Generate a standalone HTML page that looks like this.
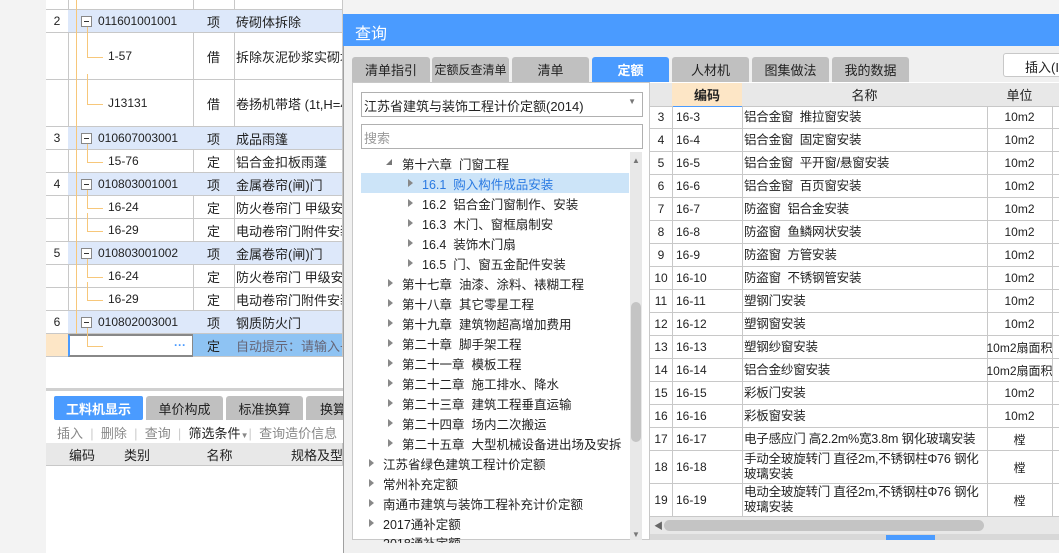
<!DOCTYPE html><html><head><meta charset="utf-8"><style>
*{margin:0;padding:0;box-sizing:border-box}
body{width:1059px;height:553px;overflow:hidden;background:#f3f3f3;font-family:"Liberation Sans","Noto Sans CJK SC",sans-serif;font-size:12px;color:#222;position:relative}
.a{position:absolute;white-space:nowrap}
.c{position:absolute;border-right:1px solid #c8c8c8;border-bottom:1px solid #c8c8c8;display:flex;align-items:center;overflow:hidden;white-space:nowrap;padding-left:4px}
.cc{justify-content:center;padding-left:0}
.blue{background:#dde8fa}
.tab{position:absolute;height:25px;background:#c0c0c0;border-radius:3px 3px 0 0;display:flex;align-items:center;justify-content:center;font-size:13px;color:#222;white-space:nowrap;overflow:hidden}
.tab.on{background:#4a9bff;color:#fff;font-weight:bold}
.tri{display:inline-block;width:0;height:0;border-left:5px solid #888;border-top:4px solid transparent;border-bottom:4px solid transparent}
.tr{position:absolute;height:20px;display:flex;align-items:center;font-size:12.5px;white-space:nowrap}
.box{position:absolute;width:11px;height:11px;border:1px solid #888;background:#fff}
.box:after{content:"";position:absolute;left:2px;top:4px;width:5px;height:1px;background:#333}
</style></head><body>
<div class="a" style="left:46px;top:0;width:297px;height:553px;background:#fff"></div>
<div id="lg"></div>
<div class="a" style="left:76px;top:0;width:1px;height:334px;background:#f7c77a"></div>
<div class="a" style="left:46px;top:388px;width:297px;height:3px;background:#d0d0d0"></div>
<div class="tab on" style="left:54px;top:396px;width:89px;height:24px;border-radius:2px">工料机显示</div>
<div class="tab" style="left:146px;top:396px;width:77px;height:24px">单价构成</div>
<div class="tab" style="left:226px;top:396px;width:77px;height:24px">标准换算</div>
<div class="tab" style="left:306px;top:396px;width:40px;height:24px;justify-content:flex-start;padding-left:14px">换算</div>
<div class="a" style="left:46px;top:420px;width:297px;height:23px;background:#fff;font-size:13px;color:#888;padding:3px 0 0 11px">插入 <span style="color:#ccc">&nbsp;|&nbsp;</span> 删除 <span style="color:#ccc">&nbsp;|&nbsp;</span> 查询 <span style="color:#ccc">&nbsp;|&nbsp;</span> <span style="color:#222">筛选条件</span><span style="font-size:8px">▼</span><span style="color:#ccc">|&nbsp;</span> 查询造价信息</div>
<div class="c cc" style="left:46px;top:443px;width:73px;height:23px;background:#e8e8e8;font-size:13px">编码</div>
<div class="c cc" style="left:118px;top:443px;width:39px;height:23px;background:#e8e8e8;font-size:13px">类别</div>
<div class="c cc" style="left:156px;top:443px;width:128px;height:23px;background:#e8e8e8;font-size:13px">名称</div>
<div class="c" style="left:283px;top:443px;width:60px;height:23px;background:#e8e8e8;font-size:13px;padding-left:8px">规格及型号</div>

<div class="a" style="left:343px;top:14px;width:716px;height:539px;background:#f0f0f0;border-left:1px solid #a0a0a0"></div>
<div class="a" style="left:343px;top:14px;width:716px;height:32px;background:#4a9bff;color:#fff;font-size:16px;padding:6px 0 0 12px">查询</div>
<div class="tab" style="left:352px;top:57px;width:78px">清单指引</div>
<div class="tab" style="left:432px;top:57px;width:77px;font-size:12px">定额反查清单</div>
<div class="tab" style="left:512px;top:57px;width:77px">清单</div>
<div class="tab on" style="left:592px;top:57px;width:77px">定额</div>
<div class="tab" style="left:672px;top:57px;width:77px">人材机</div>
<div class="tab" style="left:752px;top:57px;width:77px">图集做法</div>
<div class="tab" style="left:832px;top:57px;width:77px">我的数据</div>
<div class="a" style="left:1003px;top:53px;width:60px;height:24px;background:#fff;border:1px solid #c8c8c8;border-radius:3px;font-size:13px;padding:3px 0 0 21px">插入(I)</div>
<div class="a" style="left:352px;top:82px;width:298px;height:458px;background:#fff;border:1px solid #c8c8c8"></div>
<div class="a" style="left:361px;top:92px;width:282px;height:25px;border:1px solid #b0b0b0;background:#fff;font-size:13px;padding:3px 0 0 2px">江苏省建筑与装饰工程计价定额(2014)<span style="position:absolute;right:6px;top:4px;font-size:8px;color:#777">▼</span></div>
<div class="a" style="left:361px;top:124px;width:282px;height:25px;border:1px solid #b0b0b0;background:#fff;font-size:13px;color:#999;padding:3px 0 0 2px">搜索</div>
<div class="a" style="left:361px;top:173px;width:268px;height:20px;background:#cce4f8"></div>
<div class="a" style="left:630px;top:152px;width:12px;height:388px;background:#e8e8e8"></div>
<div class="a" style="left:631px;top:302px;width:10px;height:140px;background:#c4c4c4;border-radius:5px"></div>
<div class="a" style="left:632px;top:156px;font-size:8px;color:#777">▲</div>
<div class="a" style="left:632px;top:530px;font-size:8px;color:#777">▼</div>
<div id="tree"></div>
<div class="a" style="left:650px;top:82px;width:409px;height:452px;background:#fff"></div>
<div class="c" style="left:650px;top:83px;width:23px;height:24px;background:#e8e8e8"></div>
<div class="c cc" style="left:672px;top:83px;width:71px;height:24px;background:#fde6c6;font-weight:bold;font-size:13px;border-bottom:1px solid #4a9bff">编码</div>
<div class="c cc" style="left:742px;top:83px;width:246px;height:24px;background:#e8e8e8;font-size:13px">名称</div>
<div class="c cc" style="left:987px;top:83px;width:66px;height:24px;background:#e8e8e8;font-size:13px">单位</div>
<div class="c" style="left:1052px;top:83px;width:10px;height:24px;background:#e8e8e8"></div>
<div id="rg"></div>
<div class="a" style="left:650px;top:517px;width:409px;height:17px;background:#e8e8e8"></div>
<div class="a" style="left:664px;top:520px;width:320px;height:11px;background:#c4c4c4;border-radius:6px"></div>
<div class="a" style="left:654px;top:519px;font-size:9px;color:#666">◀</div>
<div class="a" style="left:650px;top:534px;width:409px;height:6px;background:#d8d8d8"></div>
<div class="a" style="left:886px;top:535px;width:49px;height:5px;background:#4a9bff"></div>
<script>
var L=document.getElementById('lg'),s='';
var rows=[[0,10,'','','',0,0],[10,23,'2','011601001001','项','砖砌体拆除',1],[33,47,'','1-57','借','拆除灰泥砂浆实砌墙',0],[80,47,'','J13131','借','卷扬机带塔 (1t,H=40m)',0],[127,23,'3','010607003001','项','成品雨篷',1],[150,23,'','15-76','定','铝合金扣板雨蓬',0],[173,23,'4','010803001001','项','金属卷帘(闸)门',1],[196,23,'','16-24','定','防火卷帘门 甲级安装',0],[219,23,'','16-29','定','电动卷帘门附件安装',0],[242,23,'5','010803001002','项','金属卷帘(闸)门',1],[265,23,'','16-24','定','防火卷帘门 甲级安装',0],[288,23,'','16-29','定','电动卷帘门附件安装',0],[311,23,'6','010802003001','项','钢质防火门',1]];
rows.forEach(function(r){var b=r[6]?' blue':'';var t=r[0],h=r[1];
s+='<div class="c cc" style="left:46px;top:'+t+'px;width:23px;height:'+h+'px">'+r[2]+'</div>';
if(r[6]){s+='<div class="c'+b+'" style="left:68px;top:'+t+'px;width:126px;height:'+h+'px;padding-left:30px">'+r[3]+'</div><div class="box" style="left:81px;top:'+(t+6)+'px"></div>';}
else{s+='<div class="c" style="left:68px;top:'+t+'px;width:126px;height:'+h+'px;padding-left:40px">'+r[3]+'</div>';if(r[3])s+='<div class="a" style="left:87px;top:'+(t+h/2)+'px;width:16px;height:1px;background:#f7c77a"></div><div class="a" style="left:87px;top:'+(t-6)+'px;width:1px;height:'+(h/2+6)+'px;background:#f7c77a"></div>';}
s+='<div class="c cc'+b+'" style="left:193px;top:'+t+'px;width:42px;height:'+h+'px;font-size:13px">'+r[4]+'</div>';
s+='<div class="c'+b+'" style="left:234px;top:'+t+'px;width:109px;height:'+h+'px;font-size:13px;padding-left:2px">'+(r[5]||'')+'</div>';});
s+='<div class="c" style="left:46px;top:334px;width:23px;height:23px;background:#fde6c6"></div><div class="a" style="left:68px;top:334px;width:126px;height:23px;border:2px solid #888;border-left:2px solid #4a9bff;background:#fff"><span style="position:absolute;right:6px;top:2px;color:#4a9bff;font-weight:bold">···</span></div><div class="a" style="left:87px;top:328px;width:1px;height:18px;background:#f7c77a"></div><div class="a" style="left:87px;top:346px;width:16px;height:1px;background:#f7c77a"></div><div class="c cc" style="left:193px;top:334px;width:42px;height:23px;background:#8ec3f3;font-size:13px">定</div><div class="c" style="left:234px;top:334px;width:109px;height:23px;background:#8ec3f3;color:#667;font-size:13px;padding-left:2px">自动提示：请输入子目</div>';
L.innerHTML=s;
var T=[[402,'第十六章&nbsp; 门窗工程',1],[422,'16.1&nbsp; 购入构件成品安装',2],[422,'16.2&nbsp; 铝合金门窗制作、安装'],[422,'16.3&nbsp; 木门、窗框扇制安'],[422,'16.4&nbsp; 装饰木门扇'],[422,'16.5&nbsp; 门、窗五金配件安装'],[402,'第十七章&nbsp; 油漆、涂料、裱糊工程'],[402,'第十八章&nbsp; 其它零星工程'],[402,'第十九章&nbsp; 建筑物超高增加费用'],[402,'第二十章&nbsp; 脚手架工程'],[402,'第二十一章&nbsp; 模板工程'],[402,'第二十二章&nbsp; 施工排水、降水'],[402,'第二十三章&nbsp; 建筑工程垂直运输'],[402,'第二十四章&nbsp; 场内二次搬运'],[402,'第二十五章&nbsp; 大型机械设备进出场及安拆'],[383,'江苏省绿色建筑工程计价定额'],[383,'常州补充定额'],[383,'南通市建筑与装饰工程补充计价定额'],[383,'2017通补定额'],[383,'2018通补定额']];
s='';T.forEach(function(t,i){var y=153+i*20;var ic=t[2]==1?'<span style="position:absolute;left:-16px;top:6px;width:0;height:0;border-right:6px solid #777;border-top:6px solid transparent"></span>':'<span class="tri" style="position:absolute;left:-14px;top:6px"></span>';
s+='<div class="tr" style="left:'+t[0]+'px;top:'+y+'px;'+(t[2]==2?'color:#2a7ae2':'')+';'+(y>520?'height:10px;overflow:hidden;align-items:flex-start;':'')+'">'+(y>520?'':ic)+t[1]+'</div>';});
document.getElementById('tree').innerHTML=s;
var R=[['16-3','铝合金窗&nbsp; 推拉窗安装','10m2'],['16-4','铝合金窗&nbsp; 固定窗安装','10m2'],['16-5','铝合金窗&nbsp; 平开窗/悬窗安装','10m2'],['16-6','铝合金窗&nbsp; 百页窗安装','10m2'],['16-7','防盗窗&nbsp; 铝合金安装','10m2'],['16-8','防盗窗&nbsp; 鱼鳞网状安装','10m2'],['16-9','防盗窗&nbsp; 方管安装','10m2'],['16-10','防盗窗&nbsp; 不锈钢管安装','10m2'],['16-11','塑钢门安装','10m2'],['16-12','塑钢窗安装','10m2'],['16-13','塑钢纱窗安装','10m2扇面积'],['16-14','铝合金纱窗安装','10m2扇面积'],['16-15','彩板门安装','10m2'],['16-16','彩板窗安装','10m2'],['16-17','电子感应门 高2.2m%宽3.8m 钢化玻璃安装','樘'],['16-18','手动全玻旋转门 直径2m,不锈钢柱Φ76 钢化玻璃安装','樘'],['16-19','电动全玻旋转门 直径2m,不锈钢柱Φ76 钢化玻璃安装','樘']];
s='';var y=106;R.forEach(function(r,i){var h=i<15?23:33;
s+='<div class="c cc" style="left:650px;top:'+y+'px;width:23px;height:'+h+'px">'+(i+3)+'</div><div class="c" style="left:672px;top:'+y+'px;width:71px;height:'+h+'px">'+r[0]+'</div><div class="c" style="left:742px;top:'+y+'px;width:246px;height:'+h+'px;font-size:12.5px;white-space:'+(i<15?'nowrap':'normal')+';line-height:15px;padding-left:2px;letter-spacing:-0.2px">'+r[1]+'</div><div class="c cc" style="left:987px;top:'+y+'px;width:66px;height:'+h+'px">'+r[2]+'</div><div class="c" style="left:1052px;top:'+y+'px;width:10px;height:'+h+'px"></div>';y+=h;});
document.getElementById('rg').innerHTML=s;
</script>
</body></html>
